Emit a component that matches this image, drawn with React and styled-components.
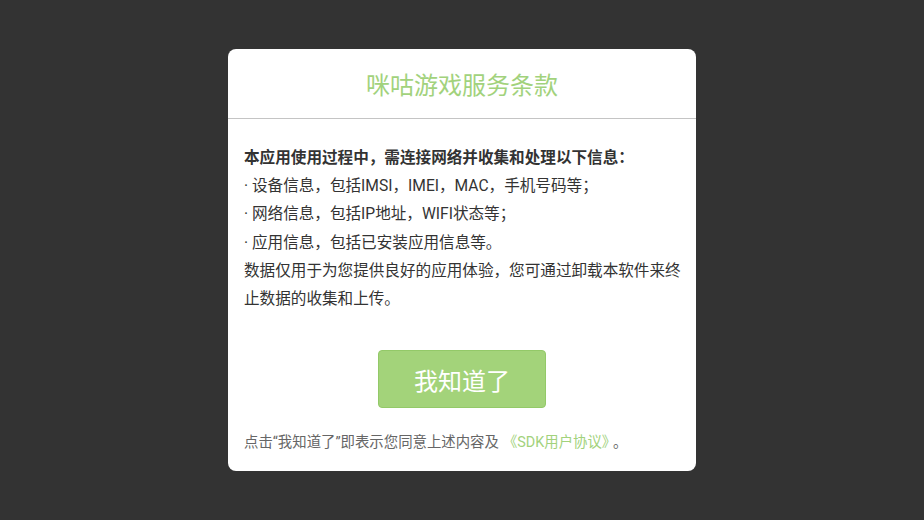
import styled, { createGlobalStyle } from "styled-components";

const Global = createGlobalStyle`
  html, body { margin: 0; padding: 0; }
  body {
    background: #333333;
    font-family: Roboto, "Noto Sans CJK SC", sans-serif;
  }
`;

const Screen = styled.div`
  width: 924px;
  height: 520px;
  display: flex;
  align-items: center;
  justify-content: center;
`;

const Dialog = styled.div`
  width: 468px;
  height: 422px;
  background: #fff;
  border-radius: 8px;
  display: flex;
  flex-direction: column;
`;

const Header = styled.div`
  height: 69px;
  border-bottom: 1px solid #c4c4c4;
  display: flex;
  align-items: center;
  justify-content: center;
  color: #a2d27c;
  font-size: 24px;
`;

const Body = styled.div`
  padding: 25px 12px 0 16px;
  color: #333;
  font-size: 15.6px;
  line-height: 28.2px;
`;

const Line = styled.div`
  font-weight: ${({ $bold }) => ($bold ? 700 : 400)};
`;

const ButtonRow = styled.div`
  display: flex;
  justify-content: center;
  margin-top: 37px;
`;

const Button = styled.button`
  width: 168px;
  height: 58px;
  background: #a3d37a;
  border: 1px solid #93c968;
  border-radius: 4px;
  color: #fff;
  font-family: inherit;
  font-size: 24px;
  cursor: pointer;
`;

const Footer = styled.div`
  padding: 0 16px;
  margin-top: 22px;
  font-size: 14.4px;
  color: #666;
`;

const Link = styled.span`
  color: #a2d27c;
  margin: 0 4px;
`;

export default function App() {
  return (
    <>
      <Global />
      <Screen>
        <Dialog>
          <Header>咪咕游戏服务条款</Header>
          <Body>
            <Line $bold>本应用使用过程中，需连接网络并收集和处理以下信息：</Line>
            <Line>· 设备信息，包括IMSI，IMEI，MAC，手机号码等；</Line>
            <Line>· 网络信息，包括IP地址，WIFI状态等；</Line>
            <Line>· 应用信息，包括已安装应用信息等。</Line>
            <Line>数据仅用于为您提供良好的应用体验，您可通过卸载本软件来终止数据的收集和上传。</Line>
          </Body>
          <ButtonRow>
            <Button>我知道了</Button>
          </ButtonRow>
          <Footer>
            点击“我知道了”即表示您同意上述内容及<Link>《SDK用户协议》</Link>。
          </Footer>
        </Dialog>
      </Screen>
    </>
  );
}
